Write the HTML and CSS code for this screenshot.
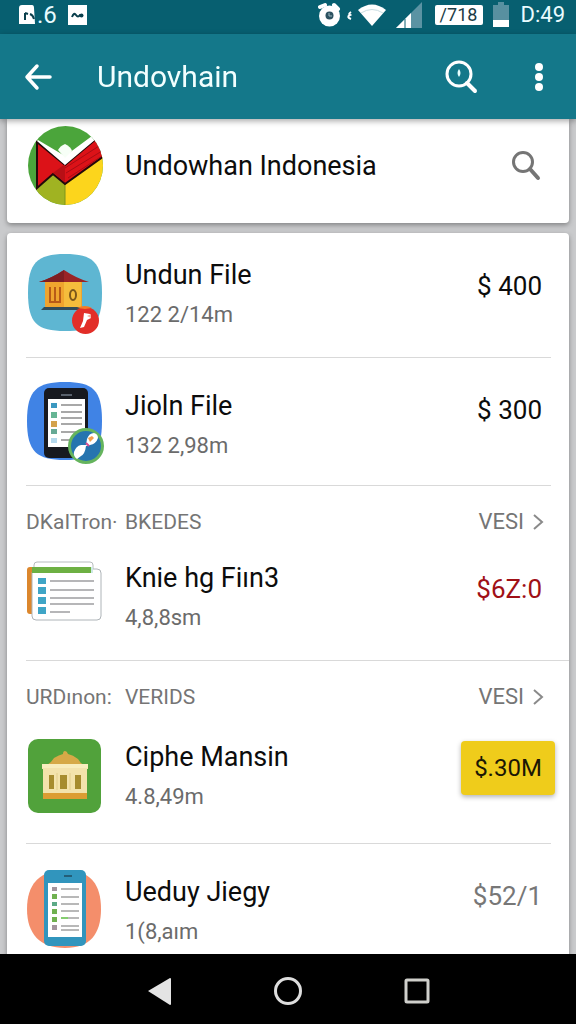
FILE: index.html
```
<!DOCTYPE html>
<html lang="en">
<head>
  <meta charset="UTF-8">
  <title>Undovhain</title>
  <meta name="viewport" content="width=device-width, initial-scale=1.0">
  <link rel="stylesheet" href="styles.css">
</head>
<body>
  <!-- Status bar -->
  <div class="status-bar">
    <div class="status-left">
      <svg width="17" height="21" viewBox="18 4 17 21">
        <path d="M19 8q0-3 3-3h10q2 0 2 3l1 16H19z" fill="#fff"/>
        <path d="M25 20v-7M25 13l3 1M30 14q3 1 4 5" stroke="#0a3f4c" stroke-width="2" fill="none"/>
      </svg>
      <span>.6</span>
      <svg class="status-note" width="20" height="20" viewBox="68 4 20 20">
        <path d="M69 4h19v20H69z" fill="#fff"/>
        <path d="M73 16q2-5 4-2t4 0l3 0" stroke="#0a3f4c" stroke-width="2" fill="none"/>
        <circle cx="82.500" cy="14.500" r="2" fill="#0a3f4c"/>
      </svg>
    </div>
    <div class="status-right">
      <svg width="104" height="26" viewBox="317 1 104 26">
        <!-- alarm -->
        <path d="M319 6l5-2M333 4l4 4" stroke="#fff" stroke-width="4" stroke-linecap="round"/>
        <circle cx="328.500" cy="15" r="10.500" fill="#fff"/>
        <circle cx="328.500" cy="14.500" r="4" fill="#2c5261"/>
        <path d="M328 12v3h3" stroke="#9cb9c2" stroke-width="1" fill="none"/>
        <path d="M350 11q-3 2-1 3-4 2 1 4" stroke="#fff" stroke-width="2" fill="none"/>
        <!-- wifi -->
        <path d="M357 9q14-11 28 0L371 25z" fill="#fff"/>
        <path d="M360 12q11-7 22 0" stroke="#c9dde2" stroke-width="1" fill="none"/>
        <!-- signal -->
        <path d="M395 27L421 1v26z" fill="#5b93a3"/>
        <path d="M395 27L410 12v15z" fill="#fff"/>
        <path d="M404 18v9" stroke="#075f70" stroke-width="1"/>
      </svg>
      <span class="charge">/718</span>
      <svg width="16" height="25" viewBox="491 2 16 25">
        <path d="M491 5h5V2h6v3h5v16h-16z" fill="#5890a0"/>
        <path d="M491 20h16v7h-16z" fill="#fff"/>
      </svg>
      <span class="clock">D:49</span>
    </div>
  </div>

  <!-- App bar -->
  <header class="app-bar">
    <button type="button" aria-label="Back">
      <svg width="28" height="28" viewBox="24 61 28 28">
        <path d="M50 75H27M37 64L27 75l10 11" fill="none" stroke="#fff" stroke-width="3.500" stroke-linecap="round" stroke-linejoin="round"/>
      </svg>
    </button>
    <h1>Undovhain</h1>
    <button type="button" aria-label="Search">
      <svg width="34" height="34" viewBox="445 59 34 34">
        <circle cx="459" cy="73" r="12" fill="none" stroke="#fff" stroke-width="3"/>
        <path d="M467 82l8 8" stroke="#fff" stroke-width="4" stroke-linecap="round"/>
        <path d="M459 68q3 4 0 8-3-4 0-8" fill="#e8ffff"/>
      </svg>
    </button>
    <button type="button" class="more" aria-label="More options">
      <svg width="10" height="30" viewBox="534 61 10 30">
        <g fill="#fff">
          <circle cx="539" cy="66" r="4"/>
          <circle cx="539" cy="76" r="4"/>
          <circle cx="539" cy="86" r="4"/>
        </g>
      </svg>
    </button>
  </header>

  <main class="content">
    <section class="card profile">
      <svg class="icon" viewBox="26 126 78 80">
        <clipPath id="flag"><ellipse cx="65.500" cy="165.500" rx="37.500" ry="39.500"/></clipPath>
        <g clip-path="url(#flag)">
          <path d="M26 126h78v80H26z" fill="#4ba53b"/>
          <path d="M37 187l16-14 12 11v24H26z" fill="#a0b322"/>
          <path d="M65 184l40-31v56H65z" fill="#fcd51c"/>
          <path d="M65 184v24" stroke="#7a941d" stroke-width="1"/>
          <path d="M37 142l28 23 31-26 8 17-39 28-12-10-16 14z" fill="#dc1218" stroke="#23090a" stroke-width="2"/>
          <path d="M65 168l34-22M66 173l36-22M68 178l34-22" stroke="#a80d14" stroke-width="1"/>
          <path d="M53 173l12-9v18z" fill="#b80f15"/>
          <path d="M37 141l28 24 31-26-4-3-27 20-27-16z" fill="#fff"/>
        </g>
        <path d="M58 150q2-4 7-6 6 3 7 7l-7 7z" fill="#f7fff7"/>
      </svg>
      <h2>Undowhan Indonesia</h2>
      <button type="button" aria-label="Search files">
        <svg width="32" height="32" viewBox="510 149 32 32">
          <circle cx="522" cy="161" r="9.500" fill="none" stroke="#757575" stroke-width="3"/>
          <path d="M529 168l8 9" stroke="#757575" stroke-width="4" stroke-linecap="round"/>
        </svg>
      </button>
    </section>

    <section class="card files">
      <article class="row">
        <svg class="icon" viewBox="26 255 78 80">
          <path d="M65 254c28 0 37 8 37 39s-9 38-37 38-37-8-37-38 9-39 37-39z" fill="#5eb6d2"/>
          <path d="M45 281h37v27H45z" fill="#efa42e"/>
          <path d="M64 282h17v25H64z" fill="#f5bd3c"/>
          <path d="M50 287v15M55 287v15M60 287v15M49 302h12" stroke="#b85a17" stroke-width="2"/>
          <ellipse cx="73" cy="295" rx="3" ry="5" fill="none" stroke="#7b571b" stroke-width="2"/>
          <path d="M39 282q13-4 25-12 12 8 25 12z" fill="#9a2426"/>
          <path d="M64 270v12H39q13-4 25-12" fill="#7e1e22"/>
          <path d="M44 307h36v3H41z" fill="#314c59"/>
          <circle cx="85.500" cy="320.500" r="13.500" fill="#e22e28"/>
          <path d="M77 308q8-4 15 0l-7 1z" fill="#f47b26"/>
          <path d="M84 313l6 1 1 4-4 2-3 7-4 1 3-7z" fill="#fff"/>
          <path d="M87 316l4-2v4z" fill="#f5b0a2"/>
        </svg>
        <div class="info">
          <h3>Undun File</h3>
          <p>122 2/14m</p>
        </div>
        <span class="price">$ 400</span>
      </article>

      <article class="row row-tall">
        <svg class="icon" viewBox="26 386 78 80">
          <path d="M65 382c28 0 37 8 37 39s-9 39-37 39-38-8-38-39 10-39 38-39z" fill="#4083e5"/>
          <rect x="44" y="388" width="44" height="70" rx="5" fill="#17191f"/>
          <path d="M61 395h11" stroke="#59616c" stroke-width="2"/>
          <path d="M48 399h37v48H48z" fill="#fff"/>
          <path d="M61 405h21M61 412h21M61 418h21M61 424h21M61 432h16M61 440h10" stroke="#a8a8a8" stroke-width="2"/>
          <path d="M51 403h6v5h-6z" fill="#3b98c0"/>
          <path d="M51 412h6v6h-6z" fill="#66b594"/>
          <path d="M51 421h6v6h-6z" fill="#d3a24c"/>
          <path d="M51 429h6v5h-6z" fill="#66a995"/>
          <path d="M51 438h6v5h-6z" fill="#b5d9ed"/>
          <circle cx="86" cy="446" r="16.500" fill="#2674af" stroke="#65b45d" stroke-width="3"/>
          <path d="M74 452q2-6 7-7l5 0 1-6q2-6 7-6 4 1 4 5-2 6-8 7l-4 1q-1 8-5 10l-4 3q-4-3-3-7z" fill="#fff"/>
          <path d="M88 438l4-2 2 2-4 4z" fill="#f3a04c"/>
          <path d="M86 443l3 3" stroke="#d34b91" stroke-width="2"/>
        </svg>
        <div class="info">
          <h3>Jioln File</h3>
          <p>132 2,98m</p>
        </div>
        <span class="price price-raised">$ 300</span>
      </article>

      <div class="group-head">
        <h4><span>DKaITron·</span> BKEDES</h4>
        <a href="#">VESI
          <svg width="12" height="18" viewBox="0 0 12 18"><path d="M2 2l8 7-8 7" fill="none" stroke="#8a8a8a" stroke-width="2"/></svg>
        </a>
      </div>
      <article class="row row-grouped row-wide">
        <svg class="icon" viewBox="26 558 78 80">
          <rect x="27" y="567" width="12" height="47" rx="3" fill="#dc872d"/>
          <rect x="34" y="562" width="59" height="20" rx="3" fill="#fff" stroke="#b7bcbe" stroke-width="1"/>
          <rect x="32" y="569" width="69" height="51" rx="4" fill="#fff" stroke="#aeb4b8" stroke-width="1"/>
          <path d="M32 567h59v6H32z" fill="#6db043"/>
          <path d="M91 567h2v6h-2z" fill="#cde9e5"/>
          <g fill="#3fa5c6">
            <path d="M38 578h8v6h-8zM38 587h8v7h-8zM38 597h8v7h-8zM38 607h8v7h-8z"/>
          </g>
          <path d="M50 581h44M50 590h44M50 598h44M50 604h44M50 612h20" stroke="#b6b6b8" stroke-width="2"/>
        </svg>
        <div class="info">
          <h3>Knie hg Fiın3</h3>
          <p>4,8,8sm</p>
        </div>
        <span class="price price-red">$6Z:0</span>
      </article>

      <div class="group-head">
        <h4><span>URDınon:</span> VERIDS</h4>
        <a href="#">VESI
          <svg width="12" height="18" viewBox="0 0 12 18"><path d="M2 2l8 7-8 7" fill="none" stroke="#8a8a8a" stroke-width="2"/></svg>
        </a>
      </div>
      <article class="row row-offer">
        <svg class="icon" viewBox="26 737 78 80">
          <rect x="28" y="739" width="73" height="74" rx="10" fill="#51a23b"/>
          <path d="M47 765q4-2 7-7 5-3 9-4 0-3 2-3t3 3q5 1 10 5 2 4 6 6z" fill="#d6a947"/>
          <path d="M42 764h46v5h-1v25H43v-25h-1z" fill="#f3e3ac"/>
          <path d="M42 764h46v4H42z" fill="#f8edbd"/>
          <path d="M43 793h44v6H43z" fill="#dc9d32"/>
          <path d="M49 775h5v14h-5zM60 775h7v14h-7zM75 775h6v14h-6z" fill="#a68c2f"/>
          <path d="M57 773v17M70 773v17" stroke="#e2cd8c" stroke-width="1"/>
        </svg>
        <div class="info">
          <h3>Ciphe Mansin</h3>
          <p>4.8,49m</p>
        </div>
        <button type="button" class="buy">$.30M</button>
      </article>

      <article class="row row-tall">
        <svg class="icon" viewBox="26 872 78 80">
          <path d="M65 870c25 0 36 14 36 39s-11 39-36 39-38-14-38-39 13-39 38-39z" fill="#f48e6b"/>
          <rect x="44" y="870" width="42" height="76" rx="5" fill="#3195bd"/>
          <path d="M64 876h8" stroke="#245e77" stroke-width="2"/>
          <path d="M48 883h34v54H48z" fill="#fff"/>
          <path d="M61 889h18M61 897h18M61 904h18M61 911h18M61 918h18M61 926h18M61 930h18" stroke="#b8b8b8" stroke-width="2"/>
          <path d="M52 887h5v4h-5zM52 925h5v5h-5z" fill="#a3959e"/>
          <path d="M52 894h5v5h-5zM52 909h5v5h-5zM52 917h5v5h-5z" fill="#70b150"/>
          <path d="M52 902h5v4h-5z" fill="#5caa87"/>
          <path d="M61 918h7" stroke="#85cd70" stroke-width="2"/>
        </svg>
        <div class="info">
          <h3>Ueduy Jiegy</h3>
          <p>1(8,aım</p>
        </div>
        <span class="price price-raised price-muted">$52/1</span>
      </article>
    </section>
  </main>

  <!-- System navigation -->
  <nav class="nav-bar">
    <button type="button" aria-label="System back">
      <svg width="30" height="32" viewBox="0 0 30 32"><path d="M4 15L26 2q1 0 1 1v25q0 1-1 1z" fill="#e4e4e4"/></svg>
    </button>
    <button type="button" aria-label="Home">
      <svg width="30" height="32" viewBox="0 0 30 32"><circle cx="15" cy="15" r="12.500" fill="none" stroke="#dedede" stroke-width="3"/></svg>
    </button>
    <button type="button" aria-label="Recent apps">
      <svg width="30" height="32" viewBox="0 0 30 32"><rect x="4" y="4" width="22" height="22" rx="1" fill="none" stroke="#cfcfcb" stroke-width="3"/></svg>
    </button>
  </nav>
</body>
</html>
```
FILE: styles.css
```
* {
  margin: 0;
  padding: 0;
  box-sizing: border-box;
}
body {
  height: 100vh;
  display: flex;
  flex-direction: column;
  overflow: hidden;
  background: #000;
  color: #0c0c0c;
  font-family: Roboto, "Liberation Sans", sans-serif;
}
svg {
  display: block;
  flex: none;
}
button {
  display: flex;
  align-items: center;
  justify-content: center;
  border: none;
  background: none;
  font-family: inherit;
  cursor: pointer;
}
h1, h2, h3, h4 {
  font-weight: 400;
  white-space: nowrap;
}

/* Status bar */
.status-bar {
  flex: none;
  height: 34px;
  padding: 0 11px 5px 18px;
  display: flex;
  align-items: center;
  justify-content: space-between;
  background: #075f70;
  color: #e9fbff;
  font-size: 24px;
  line-height: 28px;
}
.status-left,
.status-right {
  display: flex;
  align-items: center;
}
.status-left {
  gap: 2px;
}
.status-note {
  margin-left: 8px;
}
.charge {
  width: 48px;
  height: 20px;
  margin: 0 10px 0 13px;
  border-radius: 2px;
  background: #fff;
  color: #1b3b45;
  font-size: 18px;
  line-height: 20px;
  text-align: center;
}
.clock {
  margin-left: 12px;
  font-size: 22px;
}

/* App bar */
.app-bar {
  flex: none;
  position: relative;
  z-index: 1;
  height: 85px;
  padding: 0 32px 0 24px;
  display: flex;
  align-items: center;
  background: #14788a;
  color: #f2ffff;
  box-shadow: 0 2px 6px rgba(0, 0, 0, 0.35);
}
.app-bar h1 {
  flex: 1;
  margin-left: 45px;
  font-size: 30px;
}
.app-bar .more {
  margin-left: 55px;
}

/* Cards */
.content {
  flex: 1;
  min-height: 0;
  padding: 0 7px;
  overflow-y: auto;
  scrollbar-width: none;
  background: #c9cacc;
}
.card {
  padding: 0 18px 0 19px;
  border-radius: 4px;
  background: #fff;
  box-shadow: 0 2px 5px rgba(0, 0, 0, 0.35);
}
.icon {
  width: 78px;
  height: 80px;
  overflow: visible;
}
.profile {
  margin-bottom: 10px;
  padding-top: 7px;
  padding-bottom: 17px;
  padding-right: 26px;
  border-radius: 0 0 4px 4px;
  display: flex;
  align-items: center;
}
.profile h2 {
  flex: 1;
  margin-left: 21px;
  font-size: 27px;
}

/* File rows */
.row {
  padding: 22px 9px 22px 0;
  display: flex;
  align-items: flex-start;
  border-bottom: 1px solid #d9d9d9;
}
.row-tall {
  padding-top: 28px;
  padding-bottom: 19px;
}
.row-grouped {
  padding-top: 0;
}
.row-wide {
  margin-right: -18px;
  padding-right: 27px;
}
.row-offer {
  padding-top: 4px;
  padding-bottom: 26px;
}
.row:last-child {
  border-bottom: none;
}
.info {
  flex: 1;
  margin-left: 21px;
}
.info h3 {
  font-size: 27px;
  line-height: 40px;
}
.info p {
  color: #6b6b6b;
  font-size: 22px;
  line-height: 40px;
}
.price {
  font-size: 26px;
  line-height: 62px;
}
.price-raised {
  line-height: 48px;
}
.price-red {
  color: #a01016;
}
.price-muted {
  color: #777;
}
.buy {
  width: 94px;
  height: 54px;
  margin: 4px -13px 0 0;
  border-radius: 4px;
  background: #efcc1b;
  color: #1b1705;
  font-size: 24px;
  box-shadow: 0 2px 5px rgba(0, 0, 0, 0.3);
}

/* Group headings */
.group-head {
  padding: 20px 7px 20px 0;
  display: flex;
  justify-content: space-between;
  color: #757575;
  line-height: 32px;
}
.group-head h4 {
  display: flex;
  font-size: 21px;
}
.group-head h4 span {
  width: 99px;
}
.group-head a {
  display: flex;
  align-items: center;
  gap: 8px;
  color: inherit;
  font-size: 22px;
  text-decoration: none;
}

/* System navigation */
.nav-bar {
  flex: none;
  height: 70px;
  padding-top: 5px;
  display: flex;
  align-items: center;
  justify-content: center;
  gap: 99px;
  background: #000;
}
```
